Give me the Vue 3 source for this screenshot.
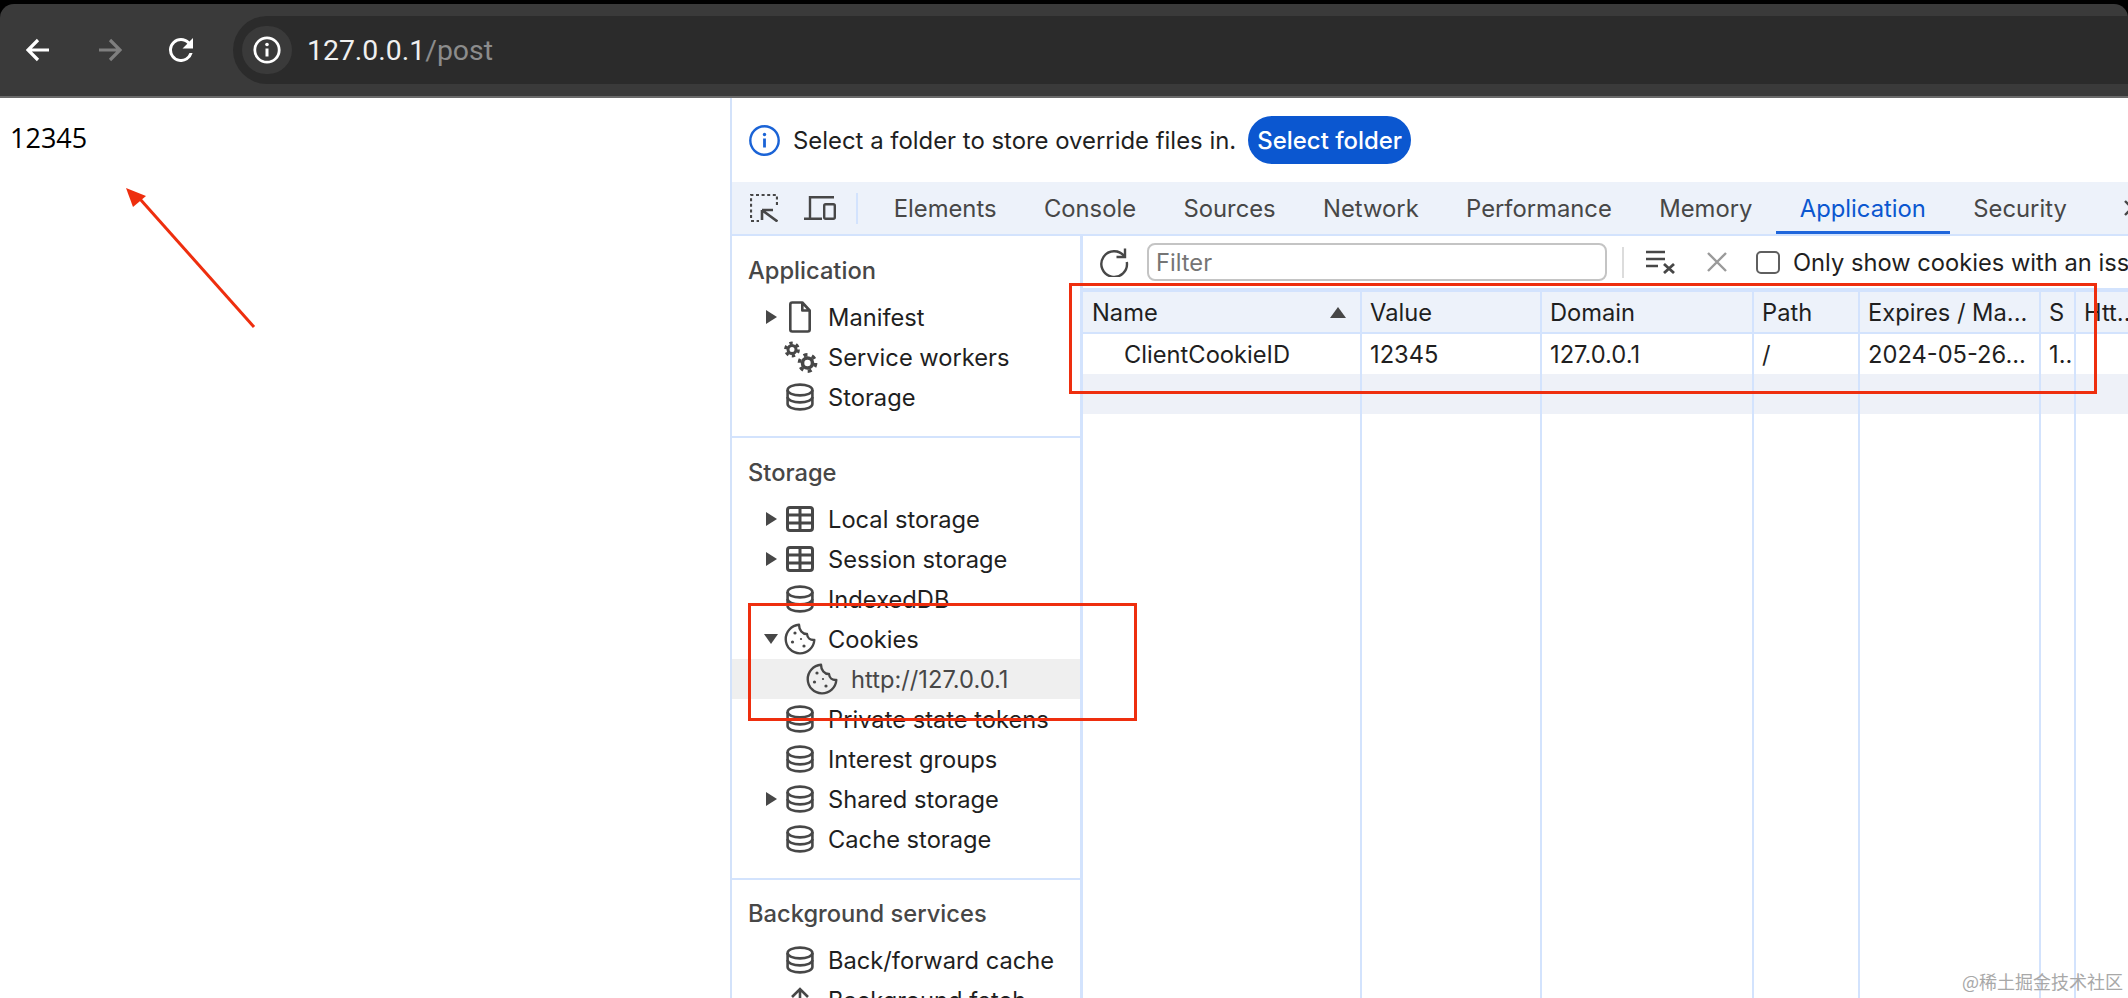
<script setup>
const tabs = ['Elements', 'Console', 'Sources', 'Network', 'Performance', 'Memory', 'Application', 'Security']
const sections = [
  { title: 'Application', rows: [
    { label: 'Manifest', icon: 'file', arrow: 'right' },
    { label: 'Service workers', icon: 'gears' },
    { label: 'Storage', icon: 'db' },
  ] },
  { title: 'Storage', rows: [
    { label: 'Local storage', icon: 'grid', arrow: 'right' },
    { label: 'Session storage', icon: 'grid', arrow: 'right' },
    { label: 'IndexedDB', icon: 'db' },
    { label: 'Cookies', icon: 'cookie', arrow: 'down' },
    { label: 'http://127.0.0.1', icon: 'cookie', child: true },
    { label: 'Private state tokens', icon: 'db' },
    { label: 'Interest groups', icon: 'db' },
    { label: 'Shared storage', icon: 'db', arrow: 'right' },
    { label: 'Cache storage', icon: 'db' },
  ] },
  { title: 'Background services', rows: [
    { label: 'Back/forward cache', icon: 'db' },
    { label: 'Background fetch', icon: 'up' },
  ] },
]
const headers = ['Name', 'Value', 'Domain', 'Path', 'Expires / Ma...', 'S', 'Htt..']
const cells = ['ClientCookieID', '12345', '127.0.0.1', '/', '2024-05-26...', '1..', '']
const blanks = ['', '', '', '', '', '', '']
</script>

<template>
  <div class="screen">
    <svg class="defs" width="0" height="0" aria-hidden="true">
      <symbol id="i-db" viewBox="0 0 28 28">
        <g fill="none" stroke="#474747" stroke-width="2.6">
          <ellipse cx="14" cy="7" rx="12.4" ry="5.4" />
          <path d="M1.6 7v14c0 3 5.6 5.4 12.4 5.4s12.400-2.400 12.400-5.400V7" />
          <path d="M1.600 14c0 3 5.600 5.400 12.400 5.400s12.400-2.400 12.400-5.400" />
        </g>
      </symbol>
      <symbol id="i-grid" viewBox="0 0 28 26">
        <g fill="none" stroke="#474747" stroke-width="3">
          <rect x="1.500" y="1.500" width="25" height="23" rx="2.500" />
          <path d="M1.500 9h25M1.500 17h25M14 1.500v23" />
        </g>
      </symbol>
      <symbol id="i-file" viewBox="0 0 24 32">
        <path d="M2.300 3.500a2 2 0 0 1 2-2h10l7.400 8v19a2 2 0 0 1-2 2H4.300a2 2 0 0 1-2-2z M14.300 1.500v8h7.400" fill="none" stroke="#474747" stroke-width="2.600" stroke-linejoin="round" />
      </symbol>
      <symbol id="i-cookie" viewBox="0 0 32 32">
        <path d="M15 1.800A14.300 14.300 0 1 0 30.300 17c-4 .2-7-2.300-7.300-6-4.500.2-8-4-8-9.200z" fill="none" stroke="#474747" stroke-width="2.400" stroke-linejoin="round" />
        <g fill="#474747">
          <circle cx="11" cy="10" r="1.600" />
          <circle cx="8.500" cy="19" r="1.600" />
          <circle cx="17" cy="16" r="1.100" />
          <circle cx="20" cy="23" r="1.600" />
        </g>
      </symbol>
      <symbol id="i-gears" viewBox="0 0 34 32">
        <g fill="none" stroke="#474747">
          <circle cx="8" cy="8.500" r="4" stroke-width="3" />
          <circle cx="8" cy="8.500" r="6.400" stroke-width="3" stroke-dasharray="3.300 3.400" />
          <circle cx="23.500" cy="22" r="5" stroke-width="3.600" />
          <circle cx="23.500" cy="22" r="8.200" stroke-width="3.400" stroke-dasharray="4 4.590" />
        </g>
      </symbol>
      <symbol id="i-up" viewBox="0 0 28 28">
        <path d="M14 27V3M6 11l8-8 8 8" fill="none" stroke="#474747" stroke-width="2.600" />
      </symbol>
    </svg>

    <header class="chrome">
      <div class="topbar">
        <svg class="nav" viewBox="0 0 24 24"><path d="M23 12H2M12 2 2 12l10 10" fill="none" stroke="#fff" stroke-width="3.200" /></svg>
        <svg class="nav dim" viewBox="0 0 24 24"><path d="M1 12h21M12 2l10 10-10 10" fill="none" stroke="#7f7f7f" stroke-width="3.200" /></svg>
        <svg class="nav reload" viewBox="4 4 16 16"><path d="M17.650 6.350A7.960 7.960 0 0 0 12 4a8 8 0 1 0 7.730 10h-2.080A6 6 0 1 1 12 6c1.660 0 3.140.69 4.220 1.780L13 11h7V4l-2.350 2.350z" fill="#fff" /></svg>
        <div class="omnibox">
          <span class="site-chip">
            <svg width="28" height="28" viewBox="0 0 28 28">
              <circle cx="14" cy="14" r="12.200" fill="none" stroke="#fff" stroke-width="2.800" />
              <path d="M14 12.500v8" stroke="#fff" stroke-width="3" />
              <circle cx="14" cy="8.500" r="1.800" fill="#fff" />
            </svg>
          </span>
          <span class="url">127.0.0.1<span class="url-path">/post</span></span>
        </div>
      </div>
    </header>

    <main class="body">
      <section class="page">12345</section>

      <section class="devtools">
        <div class="banner">
          <svg width="31" height="31" viewBox="0 0 31 31">
            <circle cx="15.500" cy="15.500" r="14.200" fill="none" stroke="#1a63d6" stroke-width="2.400" />
            <path d="M15.500 13.500v9" stroke="#1a63d6" stroke-width="2.800" />
            <circle cx="15.500" cy="9.500" r="1.700" fill="#1a63d6" />
          </svg>
          <span class="banner-text">Select a folder to store override files in.</span>
          <span class="banner-btn">Select folder</span>
        </div>

        <nav class="tabbar">
          <svg class="inspect" width="28" height="28" viewBox="0 0 28 28">
            <path d="M1 24V1h26v12" fill="none" stroke="#474747" stroke-width="2.200" stroke-dasharray="3 2.600" />
            <path d="M1 27h8" stroke="#474747" stroke-width="2.200" stroke-dasharray="3 2.600" />
            <path d="M12 16v10M12 16h11M12.500 16.500l15 11" fill="none" stroke="#474747" stroke-width="2.600" />
          </svg>
          <svg class="device" width="32" height="24" viewBox="0 0 32 24">
            <path d="M6 22V1.200h24M0 22.800h18" fill="none" stroke="#474747" stroke-width="2.400" />
            <rect x="20.200" y="8.200" width="10.600" height="14.600" rx="1.500" fill="none" stroke="#474747" stroke-width="2.400" />
          </svg>
          <i class="tab-sep"></i>
          <span v-for="t in tabs" :key="t" class="tab" :class="{ active: t === 'Application' }">{{ t }}</span>
          <svg class="more" width="20" height="20" viewBox="0 0 20 20">
            <path d="M2 3l7 7-7 7M10 3l7 7-7 7" fill="none" stroke="#474747" stroke-width="2.400" />
          </svg>
        </nav>

        <div class="panes">
          <aside class="sidebar">
            <div v-for="s in sections" :key="s.title" class="side-section">
              <h3 class="side-title">{{ s.title }}</h3>
              <div v-for="r in s.rows" :key="r.label" class="side-row" :class="{ selected: r.child }">
                <span class="arrow-slot">
                  <i v-if="r.arrow" class="tri" :class="r.arrow"></i>
                </span>
                <svg v-if="r.icon === 'db'" class="ic" width="28" height="28"><use href="#i-db" /></svg>
                <svg v-else-if="r.icon === 'grid'" class="ic" width="28" height="26"><use href="#i-grid" /></svg>
                <svg v-else-if="r.icon === 'file'" class="ic" width="28" height="32" viewBox="-2 0 28 32"><use href="#i-file" width="24" height="32" /></svg>
                <svg v-else-if="r.icon === 'cookie'" class="ic cookie" width="32" height="32"><use href="#i-cookie" /></svg>
                <svg v-else-if="r.icon === 'gears'" class="ic gears" width="34" height="32"><use href="#i-gears" /></svg>
                <svg v-else class="ic" width="28" height="28"><use href="#i-up" /></svg>
                <span class="side-label" :class="{ muted: r.child }">{{ r.label }}</span>
              </div>
            </div>
          </aside>

          <div class="cookies">
            <div class="cookie-tools">
              <svg class="tool-reload" width="30" height="30" viewBox="0 0 30 30">
                <path d="M25.500 9.500A12.800 12.800 0 1 0 27.800 15" fill="none" stroke="#474747" stroke-width="2.400" />
                <path d="M26 1.500v8.500h-8.500" fill="none" stroke="#474747" stroke-width="2.400" />
              </svg>
              <div class="filter">Filter</div>
              <i class="tool-sep"></i>
              <svg class="clear" width="30" height="24" viewBox="0 0 30 24">
                <path d="M0 2h19M0 9h19M0 16h12" stroke="#474747" stroke-width="2.400" />
                <path d="M18 14l10 9M28 14l-10 9" stroke="#474747" stroke-width="2.800" />
              </svg>
              <svg class="close" width="20" height="20" viewBox="0 0 20 20">
                <path d="M1 1l18 18M19 1 1 19" stroke="#9a9a9a" stroke-width="2.400" />
              </svg>
              <i class="check"></i>
              <span class="only">Only show cookies with an issue</span>
            </div>

            <div class="table">
              <div class="tr th">
                <div v-for="(h, i) in headers" :key="'h' + i" class="td">
                  {{ h }}
                  <i v-if="i === 0" class="sort"></i>
                </div>
              </div>
              <div class="tr">
                <div v-for="(c, i) in cells" :key="'c' + i" class="td" :class="{ indent: i === 0 }">{{ c }}</div>
              </div>
              <div class="tr stripe">
                <div v-for="(c, i) in blanks" :key="'s' + i" class="td"></div>
              </div>
              <div class="tr filler">
                <div v-for="(c, i) in blanks" :key="'f' + i" class="td"></div>
              </div>
            </div>
          </div>
        </div>
      </section>
    </main>

    <svg class="annot-arrow" width="150" height="160" viewBox="0 0 150 160">
      <path d="M134 147 20 19" stroke="#ee2e0e" stroke-width="3" fill="none" />
      <path d="M6 8 26 16 13 27z" fill="#ee2e0e" />
    </svg>
    <i class="annot-box box-table"></i>
    <i class="annot-box box-cookies"></i>
    <span class="watermark">@稀土掘金技术社区</span>
  </div>
</template>

<style scoped>
.screen {
  position: relative;
  width: 2128px;
  height: 998px;
  overflow: hidden;
  display: flex;
  flex-direction: column;
  background: #000;
  font-family: Inter, "Liberation Sans", sans-serif;
}
.defs { position: absolute; }

.chrome { padding-top: 4px; background: #000; flex: none; }
.topbar {
  height: 92px;
  box-sizing: content-box;
  background: #3a3a3a;
  border-bottom: 2px solid #6a6a6a;
  border-radius: 14px 14px 0 0;
  display: flex;
  align-items: center;
  padding-left: 26px;
}
.nav { width: 24px; height: 24px; flex: none; margin-right: 48px; }
.reload { width: 26px; margin-right: 39px; margin-left: -2px; }
.omnibox {
  flex: 1;
  height: 68px;
  background: #2b2b2b;
  border-radius: 34px 0 0 34px;
  display: flex;
  align-items: center;
  padding-left: 9px;
}
.site-chip {
  width: 50px;
  height: 48px;
  border-radius: 24px;
  background: #3a3a3a;
  display: flex;
  align-items: center;
  justify-content: center;
  margin-right: 15px;
}
.url {
  font-family: Roboto, sans-serif;
  font-size: 28.400px;
  color: #f0f0f0;
}
.url-path { color: #8c8c8c; }

.body { flex: 1; display: flex; min-height: 0; background: #fff; }
.page {
  width: 730px;
  flex: none;
  box-sizing: border-box;
  padding: 22px 10px;
  font-family: "Open Sans", sans-serif;
  font-size: 27px;
  line-height: 36px;
  color: #000;
}
.devtools {
  flex: 1;
  min-width: 0;
  display: flex;
  flex-direction: column;
  border-left: 2px solid #d3e2fa;
  font-size: 23.700px;
}
.banner {
  height: 84px;
  flex: none;
  display: flex;
  align-items: center;
  padding-left: 17px;
  color: #1f1f1f;
  font-size: 23.900px;
}
.banner-text { margin-left: 13px; white-space: nowrap; }
.banner-btn {
  margin-left: 12px;
  width: 163px;
  height: 48px;
  border-radius: 24px;
  background: #0b57d0;
  color: #fff;
  font-weight: 500;
  display: flex;
  align-items: center;
  justify-content: center;
  white-space: nowrap;
}
.tabbar {
  height: 52px;
  flex: none;
  display: flex;
  align-items: center;
  background: #edf2fa;
  border-bottom: 2px solid #d3e3fd;
  overflow: hidden;
  padding-left: 18px;
  color: #474747;
  font-size: 23.800px;
}
.inspect, .device { flex: none; }
.device { margin-left: 26px; }
.tab-sep { width: 2px; height: 31px; background: #d3e3fd; margin-left: 20px; margin-right: 12px; flex: none; }
.tab {
  height: 100%;
  display: flex;
  align-items: center;
  padding: 0 23.700px;
  white-space: nowrap;
  flex: none;
}
.tab.active {
  color: #0b57d0;
  box-shadow: inset 0 -3px 0 #1f66dc;
}
.more { flex: none; margin-left: 32px; }

.panes { flex: 1; display: flex; min-height: 0; }
.sidebar {
  width: 348px;
  flex: none;
  overflow: hidden;
}
.side-section {
  padding: 15px 0 19px;
  border-bottom: 2px solid #d3e3fd;
}
.side-section:last-child { border-bottom: 0; padding-top: 14px; }
.side-title {
  margin: 0 0 6px;
  height: 40px;
  line-height: 40px;
  padding-left: 16px;
  font-size: 23.700px;
  font-weight: 500;
  color: #474747;
}
.side-row {
  height: 40px;
  display: flex;
  align-items: center;
  position: relative;
  color: #1f1f1f;
  white-space: nowrap;
}
.side-row.selected { background: #efefef; }
.arrow-slot {
  width: 54px;
  flex: none;
  display: flex;
  justify-content: flex-end;
  padding-right: 8px;
  box-sizing: border-box;
}
.tri { display: block; width: 0; height: 0; }
.tri.right {
  border-left: 11px solid #474747;
  border-top: 7px solid transparent;
  border-bottom: 7px solid transparent;
  margin-right: 1px;
}
.tri.down {
  border-top: 10px solid #474747;
  border-left: 7px solid transparent;
  border-right: 7px solid transparent;
  margin-right: 0;
}
.ic { flex: none; }
.side-label { margin-left: 14px; }
.cookie { margin-left: -2px; margin-right: -2px; }
.gears { margin-left: -2px; margin-right: -4px; }
.selected .arrow-slot { width: 76px; }
.muted { color: #474747; margin-left: 15px; }

.cookies {
  flex: 1;
  min-width: 0;
  display: flex;
  flex-direction: column;
  border-left: 3px solid #d3e3fd;
}
.cookie-tools {
  height: 52px;
  flex: none;
  display: flex;
  align-items: center;
  padding-left: 16px;
  white-space: nowrap;
  color: #1f1f1f;
  overflow: hidden;
}
.tool-reload { flex: none; }
.filter {
  width: 460px;
  height: 38px;
  flex: none;
  box-sizing: border-box;
  margin-left: 18px;
  border: 2px solid #c4c4c4;
  border-radius: 8px;
  padding-left: 7px;
  line-height: 36px;
  color: #757575;
}
.tool-sep { width: 2px; height: 31px; background: #dcdcdc; margin-left: 15px; flex: none; }
.clear { margin-left: 22px; flex: none; }
.close { margin-left: 31px; flex: none; }
.check {
  width: 24px;
  height: 23px;
  box-sizing: border-box;
  border: 2px solid #5f5f5f;
  border-radius: 5px;
  margin-left: 29px;
  flex: none;
}
.only { margin-left: 13px; }

.table {
  flex: 1;
  min-height: 0;
  display: flex;
  flex-direction: column;
  border-top: 4px solid #d3e3fd;
  color: #1f1f1f;
}
.tr {
  display: grid;
  grid-template-columns: 279px 180px 212px 106px 181px 35px 1fr;
  height: 40px;
  flex: none;
}
.th { background: #edf2fa; height: 42px; box-sizing: border-box; border-bottom: 2px solid #d3e3fd; }
.stripe { background: #eef1f8; }
.filler { flex: 1; height: auto; }
.td {
  position: relative;
  box-sizing: border-box;
  border-right: 2px solid #d3e3fd;
  padding-left: 8px;
  line-height: 42px;
  white-space: nowrap;
}
.td:first-child { padding-left: 9px; }
.td:first-child.indent { padding-left: 41px; }
.td:last-child { border-right: 0; }
.sort {
  position: absolute;
  right: 14px;
  top: 15px;
  width: 0;
  height: 0;
  border-left: 8px solid transparent;
  border-right: 8px solid transparent;
  border-bottom: 11px solid #474747;
}

.annot-arrow { position: absolute; left: 120px; top: 180px; }
.annot-box { position: absolute; box-sizing: border-box; border: 3px solid #ee2e0e; }
.box-table { left: 1069px; top: 283px; width: 1028px; height: 111px; }
.box-cookies { left: 748px; top: 603px; width: 389px; height: 118px; }
.watermark {
  position: absolute;
  left: 1962px;
  top: 969px;
  font-family: "Noto Sans CJK SC", sans-serif;
  font-size: 18px;
  line-height: 24px;
  color: #a8a8a8;
  white-space: nowrap;
}
</style>
